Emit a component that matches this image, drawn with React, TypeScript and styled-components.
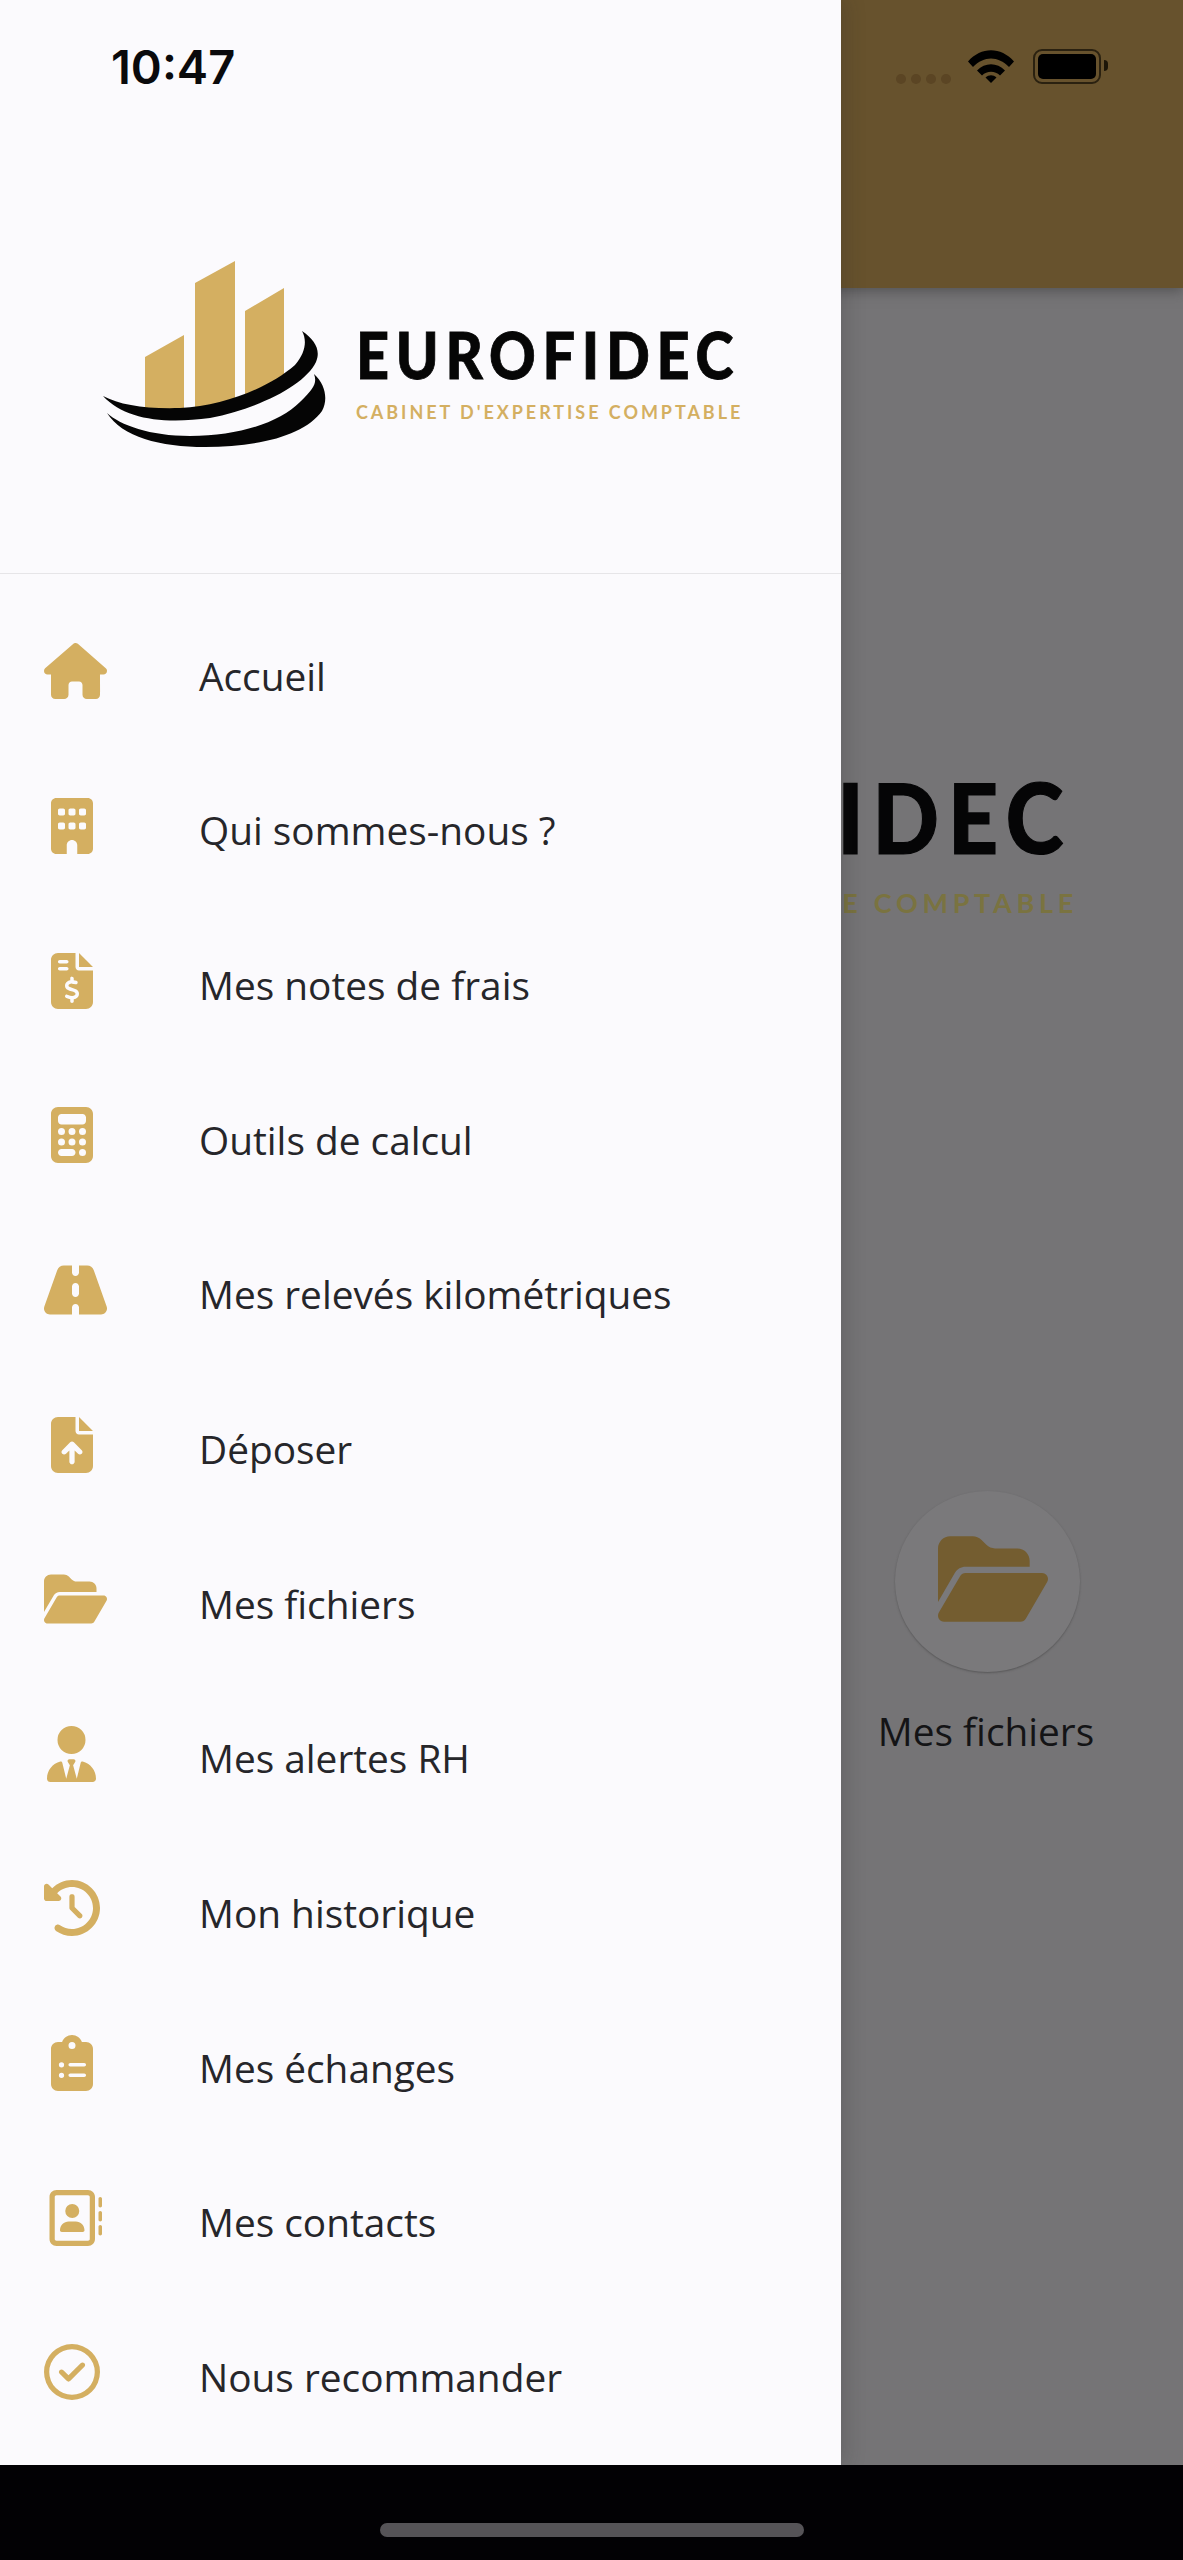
import React from "react";
import styled, { createGlobalStyle } from "styled-components";
import {
  FaHouse, FaBuilding, FaFileInvoiceDollar, FaCalculator, FaRoad, FaFileArrowUp,
  FaFolderOpen, FaUserTie, FaClockRotateLeft, FaClipboardList, FaRegAddressBook, FaRegCircleCheck,
} from "react-icons/fa6";

const GOLD = "#d4af61";

const Global = createGlobalStyle`
  html, body { margin: 0; padding: 0; background: #000; }
  body { width: 1183px; height: 2560px; overflow: hidden; font-family: "Open Sans", sans-serif; }
`;

const Phone = styled.div`
  width: 1183px;
  height: 2560px;
  display: flex;
  flex-direction: column;
  background: #000;
`;

const Screen = styled.div`
  position: relative;
  height: 2465px;
  flex: none;
  overflow: hidden;
  background: #757476;
`;

const BottomBar = styled.div`
  flex: 1;
  display: flex;
  justify-content: center;
  padding-top: 58px;
  background: #020104;
`;

const HomeHandle = styled.div`
  width: 424px;
  height: 14px;
  border-radius: 7px;
  background: #555357;
`;

const Backdrop = styled.div`
  height: 100%;
  display: flex;
  flex-direction: column;
  padding-left: 841px;
`;

const AppHeader = styled.header`
  height: 288px;
  flex: none;
  margin-left: -841px;
  padding-left: 841px;
  background: #67522d;
  box-shadow: 0 3px 12px rgba(50, 50, 50, 0.5);
`;

const StatusIcons = styled.div`
  display: flex;
  align-items: flex-start;
  padding: 49px 0 0 55px;
`;

const SignalDots = styled.div`
  display: flex;
  gap: 5px;
  margin-top: 25px;
`;

const SignalDot = styled.span`
  width: 10px;
  height: 10px;
  border-radius: 50%;
  background: #5b4524;
`;

const WifiIcon = styled.svg`
  width: 46px;
  height: 33px;
  margin: 1px 0 0 17px;
  flex: none;
`;

const Battery = styled.div`
  position: relative;
  margin-left: 19px;
  width: 68px;
  height: 35px;
  padding: 3px;
  box-sizing: border-box;
  border: 2px solid #2a2110;
  border-radius: 9px;
  &::after {
    content: "";
    position: absolute;
    right: -9px;
    top: 9px;
    width: 4px;
    height: 11px;
    border-radius: 0 4px 4px 0;
    background: #1d1608;
  }
`;

const BatteryFill = styled.div`
  height: 100%;
  border-radius: 5px;
  background: #000;
`;

const BackBrand = styled.div`
  margin-top: 485px;
  display: flex;
  flex-direction: column;
  align-items: flex-end;
`;

const BackName = styled.div`
  margin-right: 111px;
  font-family: "Lato", sans-serif;
  font-weight: 900;
  font-size: 97px;
  line-height: 88px;
  letter-spacing: 10px;
  -webkit-text-stroke: 1.2px #050506;
  color: #050506;
  transform: scaleX(0.9);
  transform-origin: right center;
`;

const BackTag = styled.div`
  margin-top: 28px;
  padding-right: 105px;
  font-family: "Lato", sans-serif;
  font-weight: 700;
  font-size: 27px;
  line-height: 28px;
  letter-spacing: 4.7px;
  color: #7a7340;
  white-space: nowrap;
`;

const Tile = styled.div`
  margin: 574px 0 0 37px;
  width: 216px;
  display: flex;
  flex-direction: column;
  align-items: center;
`;

const TileCircle = styled.div`
  width: 185px;
  height: 181px;
  margin-left: 2px;
  border-radius: 50%;
  display: flex;
  align-items: center;
  justify-content: center;
  padding: 0 0 6px 12px;
  box-sizing: border-box;
  background: #7a797b;
  box-shadow: 0 1px 2px rgba(60, 60, 60, 0.5);
  color: #745d30;
  svg { width: 110px; height: 98px; flex: none; }
`;

const TileLabel = styled.div`
  margin-top: 32px;
  font-size: 38.8px;
  line-height: 54px;
  color: #141416;
  white-space: nowrap;
`;

const Drawer = styled.aside`
  position: absolute;
  left: 0;
  top: 0;
  bottom: 0;
  width: 841px;
  display: flex;
  flex-direction: column;
  background: #fbfafd;
  box-shadow: 6px 0 18px rgba(40, 40, 40, 0.18);
`;

const DrawerHead = styled.div`
  height: 573px;
  flex: none;
  display: flex;
  flex-direction: column;
  border-bottom: 1px solid #e6e5e8;
`;

const Clock = styled.div`
  padding: 42px 0 0 111px;
  font-family: "Inter", sans-serif;
  font-weight: 600;
  font-size: 47px;
  line-height: 50px;
  color: #0a0a0c;
`;

const Logo = styled.div`
  display: flex;
  align-items: flex-start;
  margin: 163px 0 0 100px;
`;

const LogoMark = styled.svg`
  width: 230px;
  height: 200px;
  flex: none;
`;

const LogoText = styled.div`
  display: flex;
  flex-direction: column;
  margin: 72px 0 0 26px;
`;

const LogoName = styled.div`
  font-family: "Lato", sans-serif;
  font-weight: 900;
  font-size: 64px;
  line-height: 56px;
  letter-spacing: 7.5px;
  -webkit-text-stroke: 0.8px #060606;
  color: #060606;
  white-space: nowrap;
  transform: scaleX(0.9);
  transform-origin: left center;
`;

const LogoTag = styled.div`
  margin-top: 19px;
  font-family: "Lato", sans-serif;
  font-weight: 700;
  font-size: 18px;
  line-height: 20px;
  letter-spacing: 2.95px;
  color: ${GOLD};
  white-space: nowrap;
`;

const Menu = styled.nav`
  display: flex;
  flex-direction: column;
  padding-top: 25px;
`;

const Row = styled.div`
  height: 154.65px;
  flex: none;
  display: flex;
  align-items: center;
`;

const IconSlot = styled.div<{ $left: number; $w: number }>`
  width: 199px;
  flex: none;
  box-sizing: border-box;
  padding-left: ${(p) => p.$left}px;
  margin-top: -10px;
  color: ${GOLD};
  line-height: 0;
  svg { width: ${(p) => p.$w}px; height: 56px; }
`;

const Label = styled.span`
  font-size: 38.8px;
  line-height: 54px;
  color: #26262a;
  margin-top: -1px;
`;

type Item = { label: string; Icon: React.ComponentType; left: number; w: number };

const items: Item[] = [
  { label: "Accueil", Icon: FaHouse, left: 44, w: 63 },
  { label: "Qui sommes-nous ?", Icon: FaBuilding, left: 51, w: 42 },
  { label: "Mes notes de frais", Icon: FaFileInvoiceDollar, left: 51, w: 42 },
  { label: "Outils de calcul", Icon: FaCalculator, left: 51, w: 42 },
  { label: "Mes relevés kilométriques", Icon: FaRoad, left: 44, w: 63 },
  { label: "Déposer", Icon: FaFileArrowUp, left: 51, w: 42 },
  { label: "Mes fichiers", Icon: FaFolderOpen, left: 44, w: 63 },
  { label: "Mes alertes RH", Icon: FaUserTie, left: 47, w: 49 },
  { label: "Mon historique", Icon: FaClockRotateLeft, left: 44, w: 56 },
  { label: "Mes échanges", Icon: FaClipboardList, left: 51, w: 42 },
  { label: "Mes contacts", Icon: FaRegAddressBook, left: 46, w: 56 },
  { label: "Nous recommander", Icon: FaRegCircleCheck, left: 44, w: 56 },
];

const LogoDrawing = () => (
  <LogoMark viewBox="100 255 230 200">
    <path d="M145 357 L184 335 V410 H145 Z M195 283 L235 261 V405 L195 409 Z M245 311 L284 288 V378 L245 396 Z" fill={GOLD} />
    <path d="M103 396 C120 405 145 409 180 408 C225 406 270 387 295 365 C306 352 307 340 302 331 C315 340 321 350 316 362 C305 385 260 408 210 418 C165 424 125 420 103 396 Z" fill="#050505" />
    <path d="M107 413 C120 425 150 436 190 436 C240 436 280 422 300 402 C315 388 317 382 314 374 C326 385 328 400 322 411 C305 435 260 447 205 447 C160 447 122 437 107 413 Z" fill="#050505" />
  </LogoMark>
);

const WifiDrawing = () => (
  <WifiIcon viewBox="0 0 46 33">
    <path d="M0 11.5 C13 -3.5 33 -3.5 46 11.5 L41 17 C30 5.5 16 5.5 5 17 Z" fill="#000" />
    <path d="M9 20.5 C17 12 29 12 37 20.5 L32 25.5 C27 20.5 19 20.5 14 25.5 Z" fill="#000" />
    <path d="M17.5 27.5 C21 24.5 25 24.5 28.5 27.5 L23 33 Z" fill="#000" />
  </WifiIcon>
);

export default function App() {
  return (
    <Phone>
      <Global />
      <Screen>
        <Backdrop>
          <AppHeader>
            <StatusIcons>
              <SignalDots>
                <SignalDot /><SignalDot /><SignalDot /><SignalDot />
              </SignalDots>
              <WifiDrawing />
              <Battery><BatteryFill /></Battery>
            </StatusIcons>
          </AppHeader>
          <BackBrand>
            <BackName>IDEC</BackName>
            <BackTag>E COMPTABLE</BackTag>
          </BackBrand>
          <Tile>
            <TileCircle><FaFolderOpen /></TileCircle>
            <TileLabel>Mes fichiers</TileLabel>
          </Tile>
        </Backdrop>
        <Drawer>
          <DrawerHead>
            <Clock>10:47</Clock>
            <Logo>
              <LogoDrawing />
              <LogoText>
                <LogoName>EUROFIDEC</LogoName>
                <LogoTag>CABINET D'EXPERTISE COMPTABLE</LogoTag>
              </LogoText>
            </Logo>
          </DrawerHead>
          <Menu>
            {items.map(({ label, Icon, left, w }) => (
              <Row key={label}>
                <IconSlot $left={left} $w={w}><Icon /></IconSlot>
                <Label>{label}</Label>
              </Row>
            ))}
          </Menu>
        </Drawer>
      </Screen>
      <BottomBar><HomeHandle /></BottomBar>
    </Phone>
  );
}
